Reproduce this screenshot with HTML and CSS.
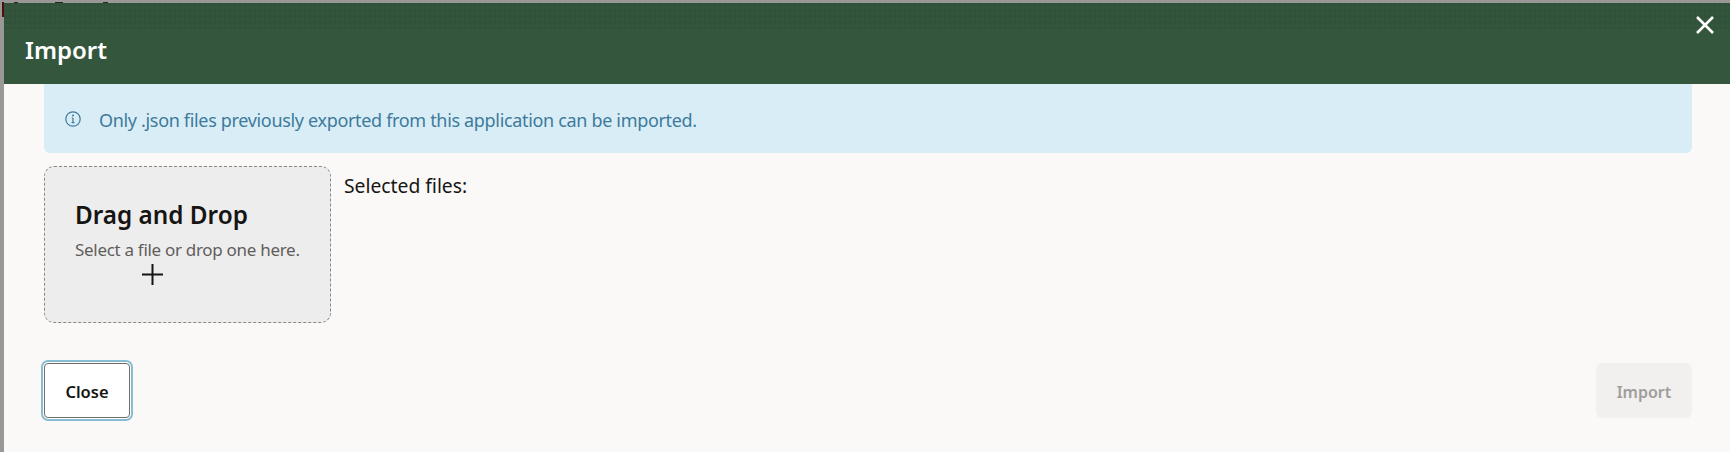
FILE: index.html
```html
<!DOCTYPE html>
<html lang="en">
<head>
    <meta charset="UTF-8">
    <title>Import</title>
    <link rel="stylesheet" href="styles.css">
</head>
<body>
    <div class="page-behind">
        <i class="scrap scrap-bar"></i>
        <i class="scrap scrap-a"></i>
        <i class="scrap scrap-b"></i>
        <i class="scrap scrap-c"></i>
    </div>

    <div class="dialog">
        <header class="dialog-header">
            <h1 class="dialog-title">Import</h1>
            <button class="dialog-close" aria-label="Close">
                <svg viewBox="0 0 18 18" width="18" height="18"><path d="M1 1 17 17M17 1 1 17"/></svg>
            </button>
        </header>

        <main class="dialog-body">
            <div class="info-banner">
                <svg class="info-icon" viewBox="0 0 16 16" width="16" height="16">
                    <circle cx="8" cy="8" r="7.2"/>
                    <path d="M8 7v4.6M6.6 11.6h2.8M6.8 7H8"/>
                    <circle class="info-dot" cx="8" cy="4.6" r="1"/>
                </svg>
                <span>Only .json files previously exported from this application can be imported.</span>
            </div>

            <div class="upload-row">
                <div class="drop-zone">
                    <h2 class="drop-title">Drag and Drop</h2>
                    <p class="drop-text">Select a file or drop one here.</p>
                    <svg class="drop-plus" viewBox="0 0 21 21" width="21" height="21"><path d="M10.5 0v21M0 10.5h21"/></svg>
                </div>
                <div class="selected-files">Selected files:</div>
            </div>

            <footer class="dialog-footer">
                <button class="btn btn-close">Close</button>
                <button class="btn btn-import" disabled>Import</button>
            </footer>
        </main>
    </div>
</body>
</html>
```

FILE: styles.css
```css
:root {
    --header: #34563d;
    --body: #fbf9f8;
    --info-bg: #d9edf6;
    --info-text: #3d7a9c;
}

* {
    margin: 0;
    padding: 0;
    box-sizing: border-box;
    font-family: 'Noto Sans', 'Open Sans', sans-serif;
}

html, body {
    height: 452px;
    overflow: hidden;
}

body {
    background-color: #999896;
    position: relative;
    padding: 3px 0 0 4px;
}

/* bits of the page under the dialog */
.page-behind {
    position: absolute;
    top: 0;
    left: 0;
    width: 100%;
    height: 17px;
}

.scrap {
    position: absolute;
    top: 2px;
    height: 1px;
    background-color: #2a2320;
}

.scrap-bar {
    left: 2px;
    width: 2px;
    height: 15px;
    background-color: #4a1208;
}

.scrap-a { left: 14px; width: 4px; }
.scrap-b { left: 55px; width: 8px; }
.scrap-c { left: 103px; width: 5px; }

.dialog {
    position: relative;
    height: 449px;
    display: flex;
    flex-direction: column;
    background-color: var(--body);
}

.dialog-header {
    height: 81px;
    flex-shrink: 0;
    display: flex;
    justify-content: space-between;
    align-items: flex-start;
    padding: 0 16px 0 21px;
    background-color: var(--header);
    background-image:
        repeating-linear-gradient(to right, rgba(0, 0, 0, 0.03) 0 2px, transparent 2px 5px),
        repeating-linear-gradient(to bottom, rgba(0, 0, 0, 0.04) 0 3px, transparent 3px 6px);
    background-size: 100% 26px;
    background-repeat: no-repeat;
}

.dialog-title {
    margin-top: 32px;
    font-size: 24px;
    line-height: 30px;
    font-weight: 600;
    color: #ffffff;
}

.dialog-close {
    margin-top: 13px;
    width: 18px;
    height: 18px;
    border: none;
    background: none;
}

.dialog-close svg {
    display: block;
}

.dialog-close path {
    fill: none;
    stroke: #ffffff;
    stroke-width: 2.6;
}

.dialog-body {
    flex: 1;
    padding: 0 38px 0 40px;
    display: flex;
    flex-direction: column;
}

.info-banner {
    height: 69px;
    padding: 0 21px;
    display: flex;
    align-items: center;
    gap: 18px;
    background-color: var(--info-bg);
    border-radius: 0 0 6px 6px;
    color: var(--info-text);
    font-size: 18px;
    letter-spacing: -0.33px;
}

.info-banner span {
    margin-top: 2px;
}

.info-icon {
    flex-shrink: 0;
}

.info-icon circle, .info-icon path {
    fill: none;
    stroke: var(--info-text);
    stroke-width: 1.2;
}

.info-icon .info-dot {
    fill: var(--info-text);
    stroke: none;
}

.upload-row {
    margin-top: 13px;
    display: flex;
    gap: 13px;
}

.drop-zone {
    width: 287px;
    height: 157px;
    padding: 32px 0 0 30px;
    background-color: #eeeded;
    border: 1px dashed #8a8886;
    border-radius: 10px;
}

.drop-title {
    font-size: 24.3px;
    line-height: 32px;
    font-weight: 600;
    color: #161513;
}

.drop-text {
    margin-top: 7px;
    font-size: 17px;
    line-height: 24px;
    letter-spacing: -0.3px;
    white-space: nowrap;
    color: #5f5e5c;
}

.drop-plus {
    display: block;
    margin: 2px 0 0 67px;
}

.drop-plus path {
    fill: none;
    stroke: #161513;
    stroke-width: 2;
}

.selected-files {
    margin-top: 6px;
    font-size: 19.3px;
    line-height: 28px;
    color: #161513;
}

.dialog-footer {
    margin-top: 39px;
    display: flex;
    justify-content: space-between;
    align-items: flex-start;
}

.btn {
    height: 55px;
    border-radius: 4px;
    font-size: 16px;
    font-weight: 600;
    padding-top: 2px;
}

.btn-close {
    width: 86px;
    margin-top: 1px;
    font-size: 16.5px;
    color: #161513;
    background-color: #ffffff;
    border: 1px solid #6f6e6c;
    box-shadow: 0 0 0 1px #ffffff, 0 0 0 3px #86bdd3;
}

.btn-import {
    width: 96px;
    margin-top: 1px;
    color: #9f9e9c;
    background-color: #f1f0ef;
    border: none;
    border-radius: 6px;
}
```
